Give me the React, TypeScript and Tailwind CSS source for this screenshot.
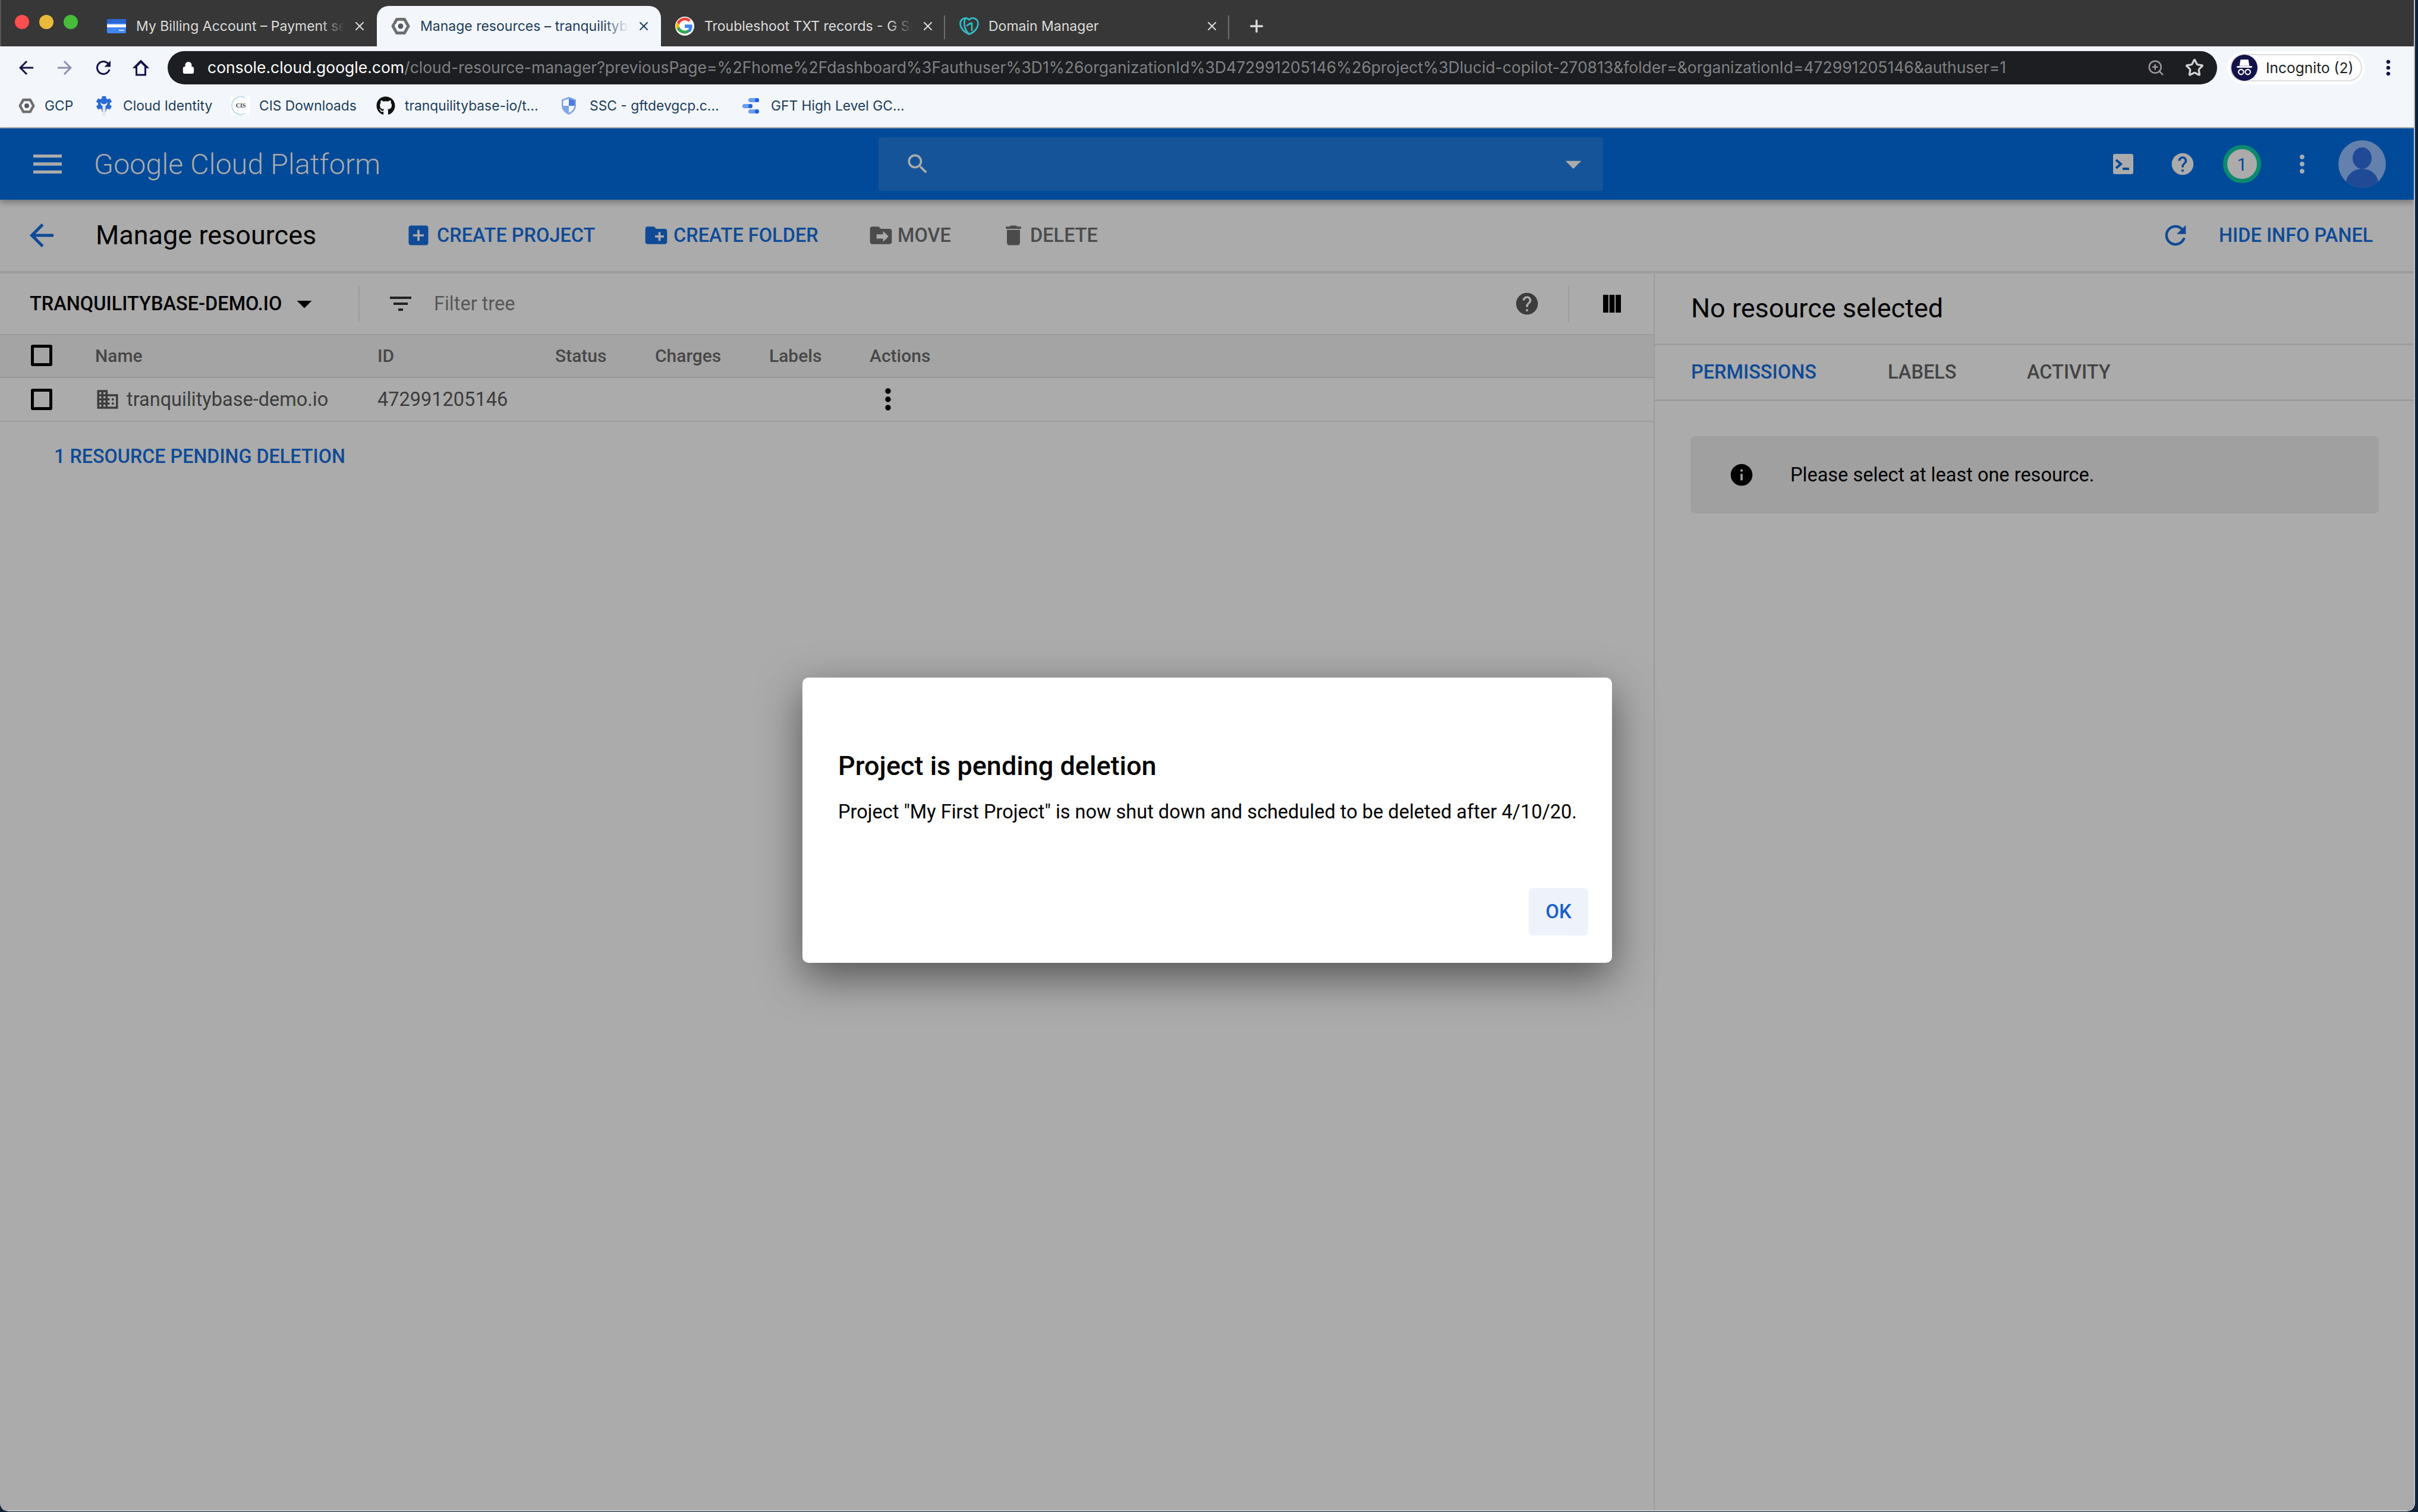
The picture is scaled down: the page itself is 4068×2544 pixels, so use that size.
import React from 'react';
import { FaGithub } from 'react-icons/fa';
import { Lock, Plus, Star, X, ZoomIn } from 'lucide-react';

const ROBOTO = "font-['Roboto',sans-serif]";

const paths = {
  back: 'M20 11H7.83l5.59-5.59L12 4l-8 8 8 8 1.41-1.41L7.83 13H20v-2z',
  menu: 'M3 18h18v-2H3v2zm0-5h18v-2H3v2zm0-7v2h18V6H3z',
  search: 'M15.5 14h-.79l-.28-.27C15.41 12.59 16 11.11 16 9.5 16 5.91 13.09 3 9.5 3S3 5.91 3 9.5 5.91 16 9.5 16c1.61 0 3.09-.59 4.23-1.57l.27.28v.79l5 4.99L20.49 19l-4.99-5zm-6 0C7.01 14 5 11.99 5 9.5S7.01 5 9.5 5 14 7.01 14 9.5 11.99 14 9.5 14z',
  help: 'M12 2C6.48 2 2 6.48 2 12s4.48 10 10 10 10-4.48 10-10S17.52 2 12 2zm1 17h-2v-2h2v2zm2.07-7.75l-.9.92C13.45 12.9 13 13.5 13 15h-2v-.5c0-1.1.45-2.1 1.17-2.83l1.24-1.26c.37-.36.59-.86.59-1.41 0-1.1-.9-2-2-2s-2 .9-2 2H8c0-2.21 1.79-4 4-4s4 1.79 4 4c0 .88-.36 1.68-.93 2.25z',
  more: 'M12 8c1.1 0 2-.9 2-2s-.9-2-2-2-2 .9-2 2 .9 2 2 2zm0 2c-1.1 0-2 .9-2 2s.9 2 2 2 2-.9 2-2-.9-2-2-2zm0 6c-1.1 0-2 .9-2 2s.9 2 2 2 2-.9 2-2-.9-2-2-2z',
  refresh: 'M17.65 6.35C16.2 4.9 14.21 4 12 4c-4.42 0-7.99 3.58-7.99 8s3.57 8 7.99 8c3.73 0 6.84-2.55 7.73-6h-2.08c-.82 2.33-3.04 4-5.65 4-3.31 0-6-2.69-6-6s2.69-6 6-6c1.66 0 3.14.69 4.22 1.78L13 11h7V4l-2.35 2.35z',
  addBox: 'M19 3H5c-1.11 0-2 .9-2 2v14c0 1.1.89 2 2 2h14c1.1 0 2-.9 2-2V5c0-1.1-.9-2-2-2zm-2 10h-4v4h-2v-4H7v-2h4V7h2v4h4v2z',
  newFolder: 'M20 6h-8l-2-2H4c-1.11 0-1.99.89-1.99 2L2 18c0 1.11.89 2 2 2h16c1.11 0 2-.89 2-2V8c0-1.11-.89-2-2-2zm-1 8h-3v3h-2v-3h-3v-2h3V9h2v3h3v2z',
  moveFolder: 'M20 6h-8l-2-2H4c-1.1 0-2 .9-2 2v12c0 1.1.9 2 2 2h16c1.1 0 2-.9 2-2V8c0-1.1-.9-2-2-2zm-6 12v-3H8v-4h6V8l5 5-5 5z',
  trash: 'M6 19c0 1.1.9 2 2 2h8c1.1 0 2-.9 2-2V7H6v12zM19 4h-3.5l-1-1h-5l-1 1H5v2h14V4z',
  filter: 'M10 18h4v-2h-4v2zM3 6v2h18V6H3zm3 7h12v-2H6v2z',
  columns: 'M3 3h5.300v18H3zM9.400 3h5.200v18H9.400zM15.700 3H21v18h-5.300z',
  domain: 'M12 7V3H2v18h20V7H12zM6 19H4v-2h2v2zm0-4H4v-2h2v2zm0-4H4V9h2v2zm0-4H4V5h2v2zm4 12H8v-2h2v2zm0-4H8v-2h2v2zm0-4H8V9h2v2zm0-4H8V5h2v2zm10 12h-8v-2h2v-2h-2v-2h2v-2h-2V9h8v10zm-2-8h-2v2h2v-2zm0 4h-2v2h2v-2z',
  info: 'M12 2C6.48 2 2 6.48 2 12s4.48 10 10 10 10-4.48 10-10S17.52 2 12 2zm1 15h-2v-6h2v6zm0-8h-2V7h2v2z',
  caret: 'M7 10l5 5 5-5z',
  home: 'M12 3 2.500 12.500H6V21h12v-8.500h3.500L12 3zm4 16H8v-8.300l4-4 4 4V19z',
  gear: 'M19.430 12.980c.04-.32.07-.64.07-.98s-.03-.66-.07-.98l2.110-1.650c.19-.15.24-.42.12-.64l-2-3.460c-.12-.22-.39-.3-.61-.22l-2.490 1c-.52-.4-1.080-.73-1.690-.98l-.38-2.650C14.460 2.180 14.250 2 14 2h-4c-.25 0-.46.18-.49.42l-.38 2.650c-.61.25-1.170.59-1.690.98l-2.490-1c-.23-.09-.49 0-.61.22l-2 3.460c-.13.22-.07.49.12.64l2.110 1.650c-.04.32-.07.65-.07.98s.03.66.07.98l-2.110 1.650c-.19.15-.24.42-.12.64l2 3.460c.12.22.39.3.61.22l2.490-1c.52.4 1.080.73 1.690.98l.38 2.650c.03.24.24.42.49.42h4c.25 0 .46-.18.49-.42l.38-2.650c.61-.25 1.170-.59 1.690-.98l2.490 1c.23.09.49 0 .61-.22l2-3.460c.12-.22.07-.49-.12-.64l-2.110-1.650zM12 15.500c-1.930 0-3.500-1.570-3.500-3.500s1.570-3.500 3.500-3.500 3.500 1.570 3.500 3.500-1.570 3.500-3.500 3.500z',
};

const Mi: React.FC<{ d: string; className?: string }> = ({ d, className }) => (
  <svg viewBox="0 0 24 24" fill="currentColor" className={`shrink-0 ${className ?? ''}`}>
    <path d={d} />
  </svg>
);

const Checkbox = () => <div className="ml-[52px] mr-[72px] w-[36px] h-[36px] shrink-0 rounded-[3px] border-[5px] border-black" />;

const GcpHex: React.FC<{ className?: string }> = ({ className }) => (
  <svg viewBox="0 0 32 32" className={`shrink-0 ${className ?? ''}`}>
    <path d="M9.500 4.500h13L29 16l-6.500 11.500h-13L3 16z" fill="none" stroke="#6f6f6f" strokeWidth="5" strokeLinejoin="round" />
    <path d="M22 9l-4 3M10 23l4-3M6 13l5 2" stroke="#f3f6fb" strokeWidth="1.200" />
    <circle cx="16" cy="16" r="4.500" fill="#565b63" />
  </svg>
);

const BillingIcon = () => (
  <svg viewBox="0 0 32 32" className="w-8 h-8 shrink-0">
    <rect x="0" y="4" width="32" height="24" rx="2" fill="#4285f4" />
    <rect x="0" y="4" width="32" height="7" fill="#2a66cf" />
    <rect x="0" y="13" width="32" height="5" fill="#fff" />
    <rect x="20" y="22" width="9" height="2" fill="#c6dafc" />
  </svg>
);

const GoogleG = () => (
  <svg viewBox="0 0 48 48" className="w-8 h-8 shrink-0">
    <circle cx="24" cy="24" r="24" fill="#fff" />
    <path fill="#ea4335" d="M24 9.500c3.500 0 6.700 1.300 9.200 3.500l5.500-5.500A23 23 0 0 0 4 14.600l6.600 5.100C12.300 13.900 17.700 9.500 24 9.500z" />
    <path fill="#4285f4" d="M43 24.500c0-1.600-.1-3.100-.4-4.500H24v8.500h10.700a9.200 9.200 0 0 1-4 6l6.300 4.900C40.700 37 43 31.300 43 24.500z" />
    <path fill="#fbbc05" d="M10.600 28.300a14 14 0 0 1 0-8.600L4 14.600a23 23 0 0 0 0 18.800l6.600-5.100z" />
    <path fill="#34a853" d="M24 43c5.400 0 9.900-1.800 13-4.700l-6.300-4.900c-1.800 1.200-4 1.900-6.700 1.900-6.300 0-11.700-4.300-13.400-10l-6.600 5.100C7.700 38 15.300 43 24 43z" />
  </svg>
);

const GoDaddyHeart = () => (
  <svg viewBox="0 0 33 30" fill="none" stroke="#35b8c6" strokeWidth="2.800" strokeLinecap="round" strokeLinejoin="round" className="w-[33px] h-[30px] shrink-0">
    <path d="M16.500 28.500C7 25 1.500 17 1.500 10.500 1.500 5 6 1.500 10.500 1.500c2.500 0 4.500 1 6 3 2-2.500 4.500-3.500 7-3 4.500.5 8 4 8 9 0 7-6 15-15 18z" />
    <path d="M10.500 1.500C6.500 8 8 21 16.500 28.500" />
    <path d="M13 14c3-2.500 6-4 8-4v12" />
  </svg>
);

const CloudIdentityIcon = () => (
  <svg viewBox="0 0 32 38" className="w-8 h-[38px] shrink-0">
    <path fill="#2a6bd6" transform="scale(1.330)" d={paths.gear} />
    <circle cx="16" cy="16" r="8" fill="#2a6bd6" />
    <path d="M10.500 13a6 6 0 0 0 3 6.500V34a2.500 2.500 0 0 0 5 0V19.500a6 6 0 0 0 3-6.500L18.500 16h-5z" fill="#e4e8ee" />
  </svg>
);

const CisIcon = () => (
  <svg viewBox="0 0 32 32" className="w-8 h-8 bg-white shrink-0">
    <path d="M24 2.500A15 15 0 0 0 2 16a15 15 0 0 0 22 13" fill="none" stroke="#b9dbe4" strokeWidth="1.800" />
    <text x="17" y="19" textAnchor="middle" fontFamily="Liberation Serif, serif" fontWeight="700" fontSize="10" fill="#3a4048">CIS</text>
  </svg>
);

const ShieldIcon = () => (
  <svg viewBox="0 0 26 32" className="w-[26px] h-8 mr-[6px] shrink-0">
    <path d="M13 1 25 5.500V15c0 7.500-5 13-12 16C6 28 1 22.500 1 15V5.500z" fill="#7ea5e8" />
    <path d="M13 4 22.500 7.500V16H13z" fill="#477de0" />
    <path d="M13 4v12H3.500V7.500zM13 16h9.500c-.5 5.500-4.500 9.500-9.500 12z" fill="#f3f6fb" />
  </svg>
);

const GftIcon = () => (
  <svg viewBox="0 0 28 26" className="w-7 h-[26px] mr-[4px] shrink-0">
    <rect x="10" y="0" width="18" height="7" rx="3.500" fill="#6a9df0" />
    <circle cx="24.500" cy="3.500" r="3.500" fill="#1a62e0" />
    <rect x="0" y="10" width="17" height="7" rx="3.500" fill="#6a9df0" />
    <circle cx="13.500" cy="13.500" r="3.500" fill="#1a62e0" />
    <rect x="10" y="19" width="18" height="7" rx="3.500" fill="#6a9df0" />
    <circle cx="24.500" cy="22.500" r="3.500" fill="#1a62e0" />
  </svg>
);

const ChromeTab: React.FC<{ icon: React.ReactNode; title: string; active?: boolean; fade?: boolean; divider?: boolean }> = ({ icon, title, active, fade, divider }) => (
  <div className={`relative w-[478px] h-[68px] flex items-center pl-[24px] pr-[17px] ${active ? 'bg-[#f3f6fb] rounded-t-[20px] text-[#1c3d5e]' : 'text-[#dcdcdc]'}`}>
    <div className="w-[48px] flex items-center shrink-0">{icon}</div>
    <div className="relative flex-1 overflow-hidden whitespace-nowrap text-[23px] h-[30px] leading-[30px] pl-[1px]">
      {title}
      {fade && <div className={`absolute right-0 top-0 h-full w-[40px] bg-gradient-to-r from-transparent ${active ? 'to-[#f3f6fb]' : 'to-[#373737]'}`} />}
    </div>
    <X className="w-[24px] h-[24px] ml-[14px] shrink-0" strokeWidth={2} />
    {divider && <div className="absolute right-0 top-[16px] h-[40px] w-[2px] bg-[#6e6e6e]" />}
  </div>
);

const Bookmark: React.FC<{ icon: React.ReactNode; label: string; width: number }> = ({ icon, label, width }) => (
  <div className="flex items-center gap-[16px]" style={{ width }}>
    {icon}
    <span className="text-[22.8px] text-[#1c3d5e] whitespace-nowrap">{label}</span>
  </div>
);

const ActionButton: React.FC<{ d: string; label: string; className: string; iconClass: string }> = ({ d, label, className, iconClass }) => (
  <div className={`flex items-center font-medium text-[32.5px] whitespace-nowrap ${className}`}>
    <Mi d={d} className={iconClass} />
    <span>{label}</span>
  </div>
);

const headers: { label: string; width: string }[] = [
  { label: 'Name', width: 'w-[475px]' },
  { label: 'ID', width: 'w-[299px]' },
  { label: 'Status', width: 'w-[168px]' },
  { label: 'Charges', width: 'w-[192px]' },
  { label: 'Labels', width: 'w-[169px]' },
  { label: 'Actions', width: 'w-[120px]' },
];

export default function App() {
  return (
    <div className="relative w-[4068px] h-[2544px] overflow-hidden bg-[#0f2238] font-['Inter',sans-serif]">
      <div className="w-[4063px] h-[2543px] flex flex-col overflow-hidden rounded-b-[14px] border-r-[2px] border-b-[2px] border-[#c8c8c8]">
        {/* browser chrome */}
        <div className="h-[78px] shrink-0 bg-[#373737] flex items-end border-l-[2px] border-[#555]">
          <div className="flex items-center gap-[17px] w-[154px] self-start pt-[25px] pl-[23px]">
            <span className="w-[24px] h-[24px] rounded-full bg-[#fc4e4e]" />
            <span className="w-[24px] h-[24px] rounded-full bg-[#e9b93c]" />
            <span className="w-[24px] h-[24px] rounded-full bg-[#47bb3a]" />
          </div>
          <ChromeTab icon={<BillingIcon />} title="My Billing Account – Payment settings" fade />
          <ChromeTab icon={<GcpHex className="w-8 h-8" />} title="Manage resources – tranquilitybase" active fade />
          <ChromeTab icon={<GoogleG />} title="Troubleshoot TXT records - G Suite" fade divider />
          <ChromeTab icon={<GoDaddyHeart />} title="Domain Manager" divider />
          <Plus className="w-[32px] h-[32px] ml-[30px] mb-[18px] text-[#dcdcdc]" strokeWidth={2.5} />
        </div>
        <div className="h-[72px] shrink-0 bg-[#f3f6fb] flex items-center pl-[26px]">
          <div className="flex items-center w-[256px] text-[#14124a]">
            <Mi d={paths.back} className="w-[36px] h-[36px]" />
            <Mi d={paths.back} className="w-[36px] h-[36px] ml-[29px] rotate-180 text-[#8e8eae]" />
            <Mi d={paths.refresh} className="w-[36px] h-[36px] ml-[29px]" />
            <Mi d={paths.home} className="w-[36px] h-[36px] ml-[27px]" />
          </div>
          <div className="w-[3448px] h-[56px] rounded-full bg-[#1d1e21] flex items-center pl-[24px] pr-[22px]">
            <Lock className="w-[22px] h-[24px] text-white fill-white" strokeWidth={2} />
            <div className="flex-1 ml-[21px] text-[26.5px] whitespace-nowrap overflow-hidden text-[#808184]">
              <span className="text-white">console.cloud.google.com</span>/cloud-resource-manager?previousPage=%2Fhome%2Fdashboard%3Fauthuser%3D1%26organizationId%3D472991205146%26project%3Dlucid-copilot-270813&amp;folder=&amp;organizationId=472991205146&amp;authuser=1
            </div>
            <ZoomIn className="w-[30px] h-[30px] text-[#9a9a9a]" strokeWidth={2} />
            <Star className="w-[32px] h-[32px] ml-[34px] text-[#d0d0d0]" strokeWidth={2.5} />
          </div>
          <div className="ml-[17px] h-[56px] w-[232px] rounded-full bg-white flex items-center px-[5px]">
            <div className="flex-1 h-[46px] rounded-full border-[2px] border-[#dcdcdc] flex items-center">
              <div className="w-[44px] h-[44px] rounded-full bg-[#14124a] flex items-center justify-center shrink-0">
                <svg viewBox="0 0 24 24" className="w-[34px] h-[34px]" fill="none" stroke="#fff" strokeWidth="1.500">
                  <path d="M8 3h8l1 6H7z" fill="#fff" />
                  <path d="M3 11h18" strokeWidth="2" />
                  <circle cx="8" cy="17" r="3" />
                  <circle cx="16" cy="17" r="3" />
                </svg>
              </div>
              <span className="ml-[14px] text-[24.5px] text-[#1d1e21] whitespace-nowrap">Incognito (2)</span>
            </div>
          </div>
          <Mi d={paths.more} className="w-[40px] h-[40px] ml-[19px] text-[#14124a]" />
        </div>
        <div className="h-[66px] shrink-0 bg-[#f3f6fb] flex items-center pl-[31px] pb-[8px] border-b-[2px] border-[#ababab]">
          <Bookmark icon={<GcpHex className="w-[28px] h-[34px]" />} label="GCP" width={128} />
          <Bookmark icon={<CloudIdentityIcon />} label="Cloud Identity" width={229} />
          <Bookmark icon={<CisIcon />} label="CIS Downloads" width={245} />
          <Bookmark icon={<FaGithub className="w-8 h-8 text-[#111] shrink-0" />} label="tranquilitybase-io/t..." width={311} />
          <Bookmark icon={<ShieldIcon />} label="SSC - gftdevgcp.c..." width={305} />
          <Bookmark icon={<GftIcon />} label="GFT High Level GC..." width={280} />
        </div>

        {/* console */}
        <div className={`flex-1 flex flex-col bg-[#ababab] ${ROBOTO}`}>
          <div className="relative z-10 h-[120px] shrink-0 bg-[#004a99] flex items-center pl-[48px] shadow-[0_5px_10px_rgba(0,0,0,0.3)] text-[#ababab]">
            <Mi d={paths.menu} className="w-[64px] h-[64px]" />
            <span className="ml-[46px] mt-[2px] w-[1320px] text-[48.5px] font-light whitespace-nowrap">Google Cloud Platform</span>
            <div className="w-[1219px] h-[90px] rounded-[4px] bg-[#155499] flex items-center justify-between pl-[44px] pr-[18px]">
              <Mi d={paths.search} className="w-[44px] h-[44px]" />
              <Mi d={paths.caret} className="w-[64px] h-[64px]" />
            </div>
            <div className="flex items-center ml-[858px]">
              <div className="w-[34px] h-[34px] rounded-[3px] bg-[#ababab] flex items-center justify-center">
                <svg viewBox="0 0 34 34" className="w-[34px] h-[34px]" fill="none" stroke="#004a99" strokeWidth="4">
                  <path d="M5 10l8 7-8 7M16 25h11" />
                </svg>
              </div>
              <Mi d={paths.help} className="w-[44px] h-[44px] ml-[61px]" />
              <div className="ml-[46px] w-[64px] h-[64px] rounded-full border-[7px] border-[#0b8a6f] bg-[#ababab] flex items-center justify-center text-[#004a99] text-[30px]">1</div>
              <Mi d={paths.more} className="w-[48px] h-[48px] ml-[45px]" />
              <div className="ml-[37px] w-[80px] h-[80px] rounded-full bg-[#6480ad] overflow-hidden">
                <svg viewBox="0 0 80 80" className="w-full h-full">
                  <ellipse cx="40" cy="30" rx="16" ry="18" fill="#204a96" />
                  <ellipse cx="40" cy="72" rx="27" ry="24" fill="#204a96" />
                </svg>
              </div>
            </div>
          </div>

          <div className="h-[124px] shrink-0 flex items-center pl-[40px] border-b-[4px] border-[#9c9c9c]">
            <Mi d={paths.back} className="w-[60px] h-[60px] text-[#0f4a97]" />
            <span className="ml-[61px] w-[521px] text-[45px] text-black whitespace-nowrap">Manage resources</span>
            <ActionButton d={paths.addBox} label="CREATE PROJECT" className="text-[#0f4a97] w-[400px]" iconClass="w-[44px] h-[44px] mr-[9px]" />
            <ActionButton d={paths.newFolder} label="CREATE FOLDER" className="text-[#0f4a97] w-[378px]" iconClass="w-[44px] h-[44px] mr-[7px]" />
            <ActionButton d={paths.moveFolder} label="MOVE" className="text-[#4b4b4b] w-[223px]" iconClass="w-[44px] h-[44px] mr-[6px]" />
            <ActionButton d={paths.trash} label="DELETE" className="text-[#4b4b4b] w-[1951px]" iconClass="w-[44px] h-[44px] mr-[6px]" />
            <Mi d={paths.refresh} className="w-[52px] h-[52px] text-[#0f4a97]" />
            <span className="ml-[47px] text-[32.5px] font-medium text-[#0f4a97] whitespace-nowrap">HIDE INFO PANEL</span>
          </div>

          <div className="flex-1 flex">
            <div className="w-[2784px] shrink-0 border-r-[2px] border-[#9c9c9c] flex flex-col">
              <div className="h-[104px] shrink-0 flex items-center pl-[50px] border-b-[2px] border-[#9c9c9c]">
                <span className="text-[32.5px] font-medium text-black whitespace-nowrap w-[438px]">TRANQUILITYBASE-DEMO.IO</span>
                <Mi d={paths.caret} className="w-[60px] h-[60px] -ml-[6px] text-black" />
                <div className="ml-[61px] w-[2px] h-[60px] bg-[#9c9c9c]" />
                <Mi d={paths.filter} className="ml-[45px] w-[48px] h-[48px] text-[#222]" />
                <span className="ml-[32px] text-[32.5px] text-[#585858] w-[1817px]">Filter tree</span>
                <Mi d={paths.help} className="w-[44px] h-[44px] text-[#3c3c3c]" />
                <div className="ml-[47px] w-[2px] h-[60px] bg-[#9c9c9c]" />
                <Mi d={paths.columns} className="ml-[52px] w-[40px] h-[40px] text-black" />
              </div>
              <div className="h-[72px] shrink-0 bg-[#a4a4a4] flex items-center pb-[2px] border-b-[2px] border-[#969696] text-[30px] font-medium text-[#474747]">
                <Checkbox />
                {headers.map(h => (
                  <span key={h.label} className={h.width}>{h.label}</span>
                ))}
              </div>
              <div className="h-[74px] shrink-0 flex items-center border-b-[2px] border-[#9c9c9c] text-[32.5px] text-[#3c3c3c]">
                <Checkbox />
                <div className="w-[475px] flex items-center">
                  <Mi d={paths.domain} className="w-[42px] h-[42px] mr-[11px] text-[#3c3c3c]" />
                  <span className="whitespace-nowrap">tranquilitybase-demo.io</span>
                </div>
                <span className="w-[831px]">472991205146</span>
                <Mi d={paths.more} className="w-[56px] h-[56px] text-black" />
              </div>
              <div className="mt-[34px] pl-[91px] text-[32.3px] font-medium text-[#0f4a97]">1 RESOURCE PENDING DELETION</div>
            </div>

            <div className="flex-1 flex flex-col">
              <div className="h-[121px] shrink-0 flex items-center pl-[61px] border-b-[3px] border-[#9c9c9c] text-[45px] text-black whitespace-nowrap">No resource selected</div>
              <div className="h-[94px] shrink-0 flex items-center pl-[61px] border-b-[3px] border-[#9c9c9c] text-[32.5px] font-medium text-[#444]">
                <span className="w-[331px] text-[#0f4a97]">PERMISSIONS</span>
                <span className="w-[234px]">LABELS</span>
                <span>ACTIVITY</span>
              </div>
              <div className="mt-[59px] ml-[60px] w-[1158px] h-[130px] rounded-[8px] bg-[#a0a0a0] flex items-center pl-[64px] text-[32.5px] text-black">
                <Mi d={paths.info} className="w-[44px] h-[44px]" />
                <span className="ml-[60px]">Please select at least one resource.</span>
              </div>
            </div>
          </div>
        </div>
      </div>

      {/* pending deletion dialog */}
      <div className={`absolute left-[1350px] top-[1140px] w-[1362px] h-[480px] bg-white rounded-[10px] shadow-[0_24px_70px_rgba(0,0,0,0.5)] flex flex-col pl-[60px] pr-[40px] ${ROBOTO}`}>
        <div className="mt-[121px] text-[45px] leading-[56px] font-medium text-black whitespace-nowrap">Project is pending deletion</div>
        <div className="mt-[26px] text-[32.5px] leading-[46px] text-black whitespace-nowrap">Project "My First Project" is now shut down and scheduled to be deleted after 4/10/20.</div>
        <div className="mt-[105px] self-end w-[100px] h-[80px] rounded-[8px] bg-[#edf2fb] flex items-center justify-center text-[33px] font-medium text-[#1a5fd0]">OK</div>
      </div>
    </div>
  );
}
